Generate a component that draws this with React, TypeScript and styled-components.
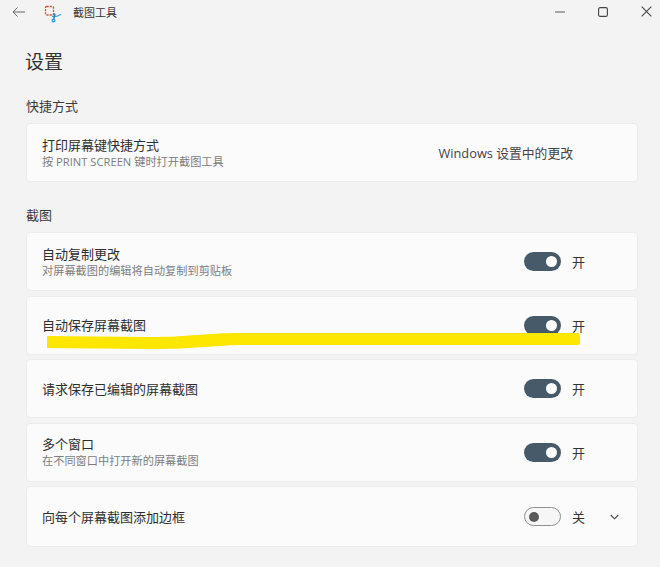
import React from "react";
import styled, { createGlobalStyle } from "styled-components";

const Global = createGlobalStyle`
  html, body { margin: 0; padding: 0; background: #f3f3f3; }
  body { font-family: "Open Sans", "Noto Sans CJK SC", sans-serif; }
`;

const Page = styled.div`
  position: relative;
  width: 660px;
  height: 567px;
  overflow: hidden;
  background: #f3f3f3;
  color: #2b2b2b;
`;

const TitleBar = styled.header`
  display: flex;
  align-items: center;
  height: 23px;
  padding-left: 12px;
`;

const AppIcon = styled.svg`
  width: 18px;
  height: 18px;
  margin: 5px 0 0 19px;
`;

const AppName = styled.span`
  margin-left: 11px;
  font-size: 11px;
  color: #333;
`;

const WindowButtons = styled.div`
  display: flex;
  align-items: center;
  gap: 33px;
  margin-left: auto;
  margin-right: 8px;
`;

const Content = styled.main`
  display: flex;
  flex-direction: column;
  padding: 0 22px 0 26px;
`;

const PageTitle = styled.h1`
  margin: 26px 0 0 -1px;
  font-size: 19px;
  line-height: 26px;
  font-weight: 400;
  color: #333;
`;

const SectionTitle = styled.h2<{ $top: number }>`
  margin: ${(p) => p.$top}px 0 8px;
  font-size: 13px;
  line-height: 18px;
  font-weight: 400;
  color: #3a3a3a;
`;

const List = styled.div`
  display: flex;
  flex-direction: column;
  gap: 4.5px;
`;

const Card = styled.section<{ $tall?: boolean }>`
  display: flex;
  align-items: center;
  box-sizing: border-box;
  height: ${(p) => (p.$tall ? 61 : 59)}px;
  padding-left: 15px;
  background: #fbfbfb;
  border: 1px solid #ececec;
  border-radius: 4px;
`;

const Text = styled.div`
  display: flex;
  flex-direction: column;
  flex: 1;
  min-width: 0;
`;

const Label = styled.div`
  font-size: 13px;
  line-height: 16px;
  color: #2e2e2e;
`;

const Sub = styled.div`
  margin-top: 1px;
  font-size: 11.2px;
  line-height: 15px;
  color: #7d7d7d;
`;

const LinkText = styled.span`
  margin-right: 64px;
  font-size: 12.8px;
  color: #444;
`;

const Control = styled.div`
  display: flex;
  align-items: center;
  width: 113px;
  flex-shrink: 0;
`;

const Track = styled.span<{ $on: boolean }>`
  display: flex;
  align-items: center;
  justify-content: ${(p) => (p.$on ? "flex-end" : "flex-start")};
  box-sizing: border-box;
  width: 37px;
  height: 19px;
  padding: 0 4px;
  border-radius: 10px;
  background: ${(p) => (p.$on ? "#475a69" : "#f6f6f6")};
  border: ${(p) => (p.$on ? "none" : "1px solid #8f8f8f")};
`;

const Thumb = styled.span<{ $on: boolean }>`
  width: ${(p) => (p.$on ? 11 : 10)}px;
  height: ${(p) => (p.$on ? 11 : 10)}px;
  border-radius: 50%;
  background: ${(p) => (p.$on ? "#ffffff" : "#5a5a5a")};
`;

const State = styled.span`
  margin-left: 11px;
  font-size: 13px;
  color: #333;
`;

const Chevron = styled.svg`
  width: 9px;
  height: 6px;
  margin-left: 25px;
`;

const Marker = styled.svg`
  position: absolute;
  left: 0;
  top: 0;
  width: 660px;
  height: 567px;
  pointer-events: none;
`;

type Row = { label: string; sub?: string; on: boolean; expand?: boolean };

const rows: Row[] = [
  { label: "自动复制更改", sub: "对屏幕截图的编辑将自动复制到剪贴板", on: true },
  { label: "自动保存屏幕截图", on: true },
  { label: "请求保存已编辑的屏幕截图", on: true },
  { label: "多个窗口", sub: "在不同窗口中打开新的屏幕截图", on: true },
  { label: "向每个屏幕截图添加边框", on: false, expand: true },
];

export default function App() {
  return (
    <Page>
      <Global />
      <TitleBar>
        <svg width="13" height="12" viewBox="0 0 13 12" fill="none" stroke="#666" strokeWidth="1">
          <path d="M13 6H1M5.500 1.500 1 6l4.500 4.500" />
        </svg>
        <AppIcon viewBox="0 0 18 18" fill="none">
          <rect x="1.500" y="1.500" width="8" height="8.500" rx="1" stroke="#c9583c" strokeWidth="1.300" strokeDasharray="2.200 1" />
          <path d="M8 11.200c3 .8 6 .2 9-2" stroke="#3aa3d8" strokeWidth="1.400" />
          <path d="M11 8.500 9.800 14" stroke="#2f7fb8" strokeWidth="1.400" />
          <circle cx="9.500" cy="15.500" r="1.400" stroke="#2c9ad6" strokeWidth="1.200" />
        </AppIcon>
        <AppName>截图工具</AppName>
        <WindowButtons>
          <svg width="10" height="2" viewBox="0 0 10 2"><path d="M0 1h10" stroke="#777" strokeWidth="1.200" /></svg>
          <svg width="10" height="10" viewBox="0 0 10 10" fill="none"><rect x=".6" y=".6" width="8.800" height="8.800" rx="1.500" stroke="#444" strokeWidth="1.100" /></svg>
          <svg width="11" height="11" viewBox="0 0 11 11" fill="none"><path d="M.7.7l9.600 9.600M10.300.7.7 10.300" stroke="#444" strokeWidth="1.100" /></svg>
        </WindowButtons>
      </TitleBar>
      <Content>
        <PageTitle>设置</PageTitle>
        <SectionTitle $top={22}>快捷方式</SectionTitle>
        <Card>
          <Text>
            <Label>打印屏幕键快捷方式</Label>
            <Sub>按 PRINT SCREEN 键时打开截图工具</Sub>
          </Text>
          <LinkText>Windows 设置中的更改</LinkText>
        </Card>
        <SectionTitle $top={24}>截图</SectionTitle>
        <List>
          {rows.map((r) => (
            <Card key={r.label} $tall={r.expand}>
              <Text>
                <Label>{r.label}</Label>
                {r.sub && <Sub>{r.sub}</Sub>}
              </Text>
              <Control>
                <Track $on={r.on}>
                  <Thumb $on={r.on} />
                </Track>
                <State>{r.on ? "开" : "关"}</State>
                {r.expand && (
                  <Chevron viewBox="0 0 9 6" fill="none">
                    <path d="M.7 1l3.800 3.800L8.300 1" stroke="#444" strokeWidth="1.100" />
                  </Chevron>
                )}
              </Control>
            </Card>
          ))}
        </List>
      </Content>
      <Marker viewBox="0 0 660 567">
        <path
          d="M47 336 L150 337 C190 337 205 333 240 333 L578 333 Q580 333 580 335 L580 343 Q580 345 578 345 L245 345 C215 345 200 349 150 349 L47 348 Z"
          fill="#fde600"
        />
      </Marker>
    </Page>
  );
}
